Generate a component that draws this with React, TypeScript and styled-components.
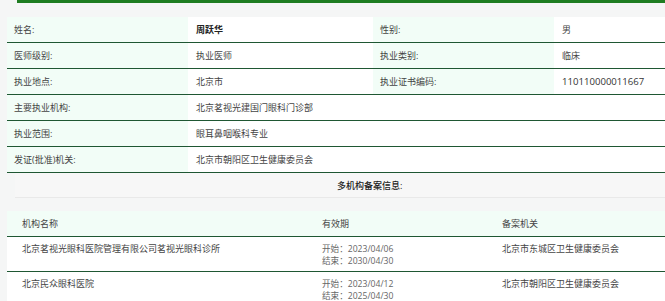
import { Fragment } from "react";
import styled, { createGlobalStyle } from "styled-components";

const GlobalStyle = createGlobalStyle`
  html, body {
    margin: 0;
    padding: 0;
    overflow: hidden;
    background: #f5f6f6;
  }
  body {
    font-family: "Open Sans", "Noto Sans CJK SC", sans-serif;
    color: #333;
  }
`;

const Page = styled.div`
  width: 665px;
  overflow: hidden;
`;

const TopBar = styled.div`
  margin-left: 17px;
  height: 3px;
  background: #1f7d22;
`;

const InfoTable = styled.div`
  margin: 14px 0 0 7px;
  display: grid;
  grid-template-columns: 181px 185px 181px 200px;
`;

const Cell = styled.div<{ $label?: boolean; $span?: number; $bold?: boolean }>`
  grid-column: span ${(p) => p.$span ?? 1};
  height: 25px;
  display: flex;
  align-items: center;
  padding-left: ${(p) => (p.$label ? 7 : 8)}px;
  background: ${(p) => (p.$label ? "#f2fdf7" : "#fff")};
  border-bottom: 1px solid #1f5733;
  font-size: 9px;
  font-weight: ${(p) => (p.$bold ? 700 : 400)};
  color: ${(p) => (p.$bold ? "#222" : "#444")};
  white-space: nowrap;
`;

const Num = styled.span`
  font-size: 9.6px;
  color: #333;
`;

const SectionBar = styled.div`
  height: 24px;
  display: flex;
  align-items: center;
  background: #f7f7f7;
  border-bottom: 1px solid #e9e9e9;
  margin-left: 15px;
  padding-left: 322px;
  font-size: 9px;
  font-weight: 500;
  color: #222;
`;

const Spacer = styled.div`
  height: 13px;
`;

const RecordTable = styled.div`
  margin-left: 7px;
  display: grid;
  grid-template-columns: 300px 180px 273px;
`;

const HeadCell = styled.div`
  height: 25px;
  display: flex;
  align-items: center;
  padding-left: 15px;
  background: #f2fdf7;
  border-bottom: 1px solid #1f5733;
  font-size: 9px;
  color: #444;
`;

const BodyCell = styled.div`
  height: 35px;
  padding: 6px 0 0 15px;
  box-sizing: border-box;
  background: #fff;
  border-bottom: 1px solid #1f5733;
  font-size: 9px;
  line-height: 12px;
  color: #444;
  white-space: nowrap;
`;

const DateLine = styled.div`
  color: #666;
  font-size: 8.6px;
`;

const records = [
  {
    name: "北京茗视光眼科医院管理有限公司茗视光眼科诊所",
    start: "2023/04/06",
    end: "2030/04/30",
    org: "北京市东城区卫生健康委员会",
  },
  {
    name: "北京民众眼科医院",
    start: "2023/04/12",
    end: "2025/04/30",
    org: "北京市朝阳区卫生健康委员会",
  },
];

export default function App() {
  return (
    <Page>
      <GlobalStyle />
      <TopBar />
      <InfoTable>
        <Cell $label>姓名:</Cell>
        <Cell $bold>周跃华</Cell>
        <Cell $label>性别:</Cell>
        <Cell>男</Cell>

        <Cell $label>医师级别:</Cell>
        <Cell>执业医师</Cell>
        <Cell $label>执业类别:</Cell>
        <Cell>临床</Cell>

        <Cell $label>执业地点:</Cell>
        <Cell>北京市</Cell>
        <Cell $label>执业证书编码:</Cell>
        <Cell>
          <Num>110110000011667</Num>
        </Cell>

        <Cell $label>主要执业机构:</Cell>
        <Cell $span={3}>北京茗视光建国门眼科门诊部</Cell>

        <Cell $label>执业范围:</Cell>
        <Cell $span={3}>眼耳鼻咽喉科专业</Cell>

        <Cell $label>发证(批准)机关:</Cell>
        <Cell $span={3}>北京市朝阳区卫生健康委员会</Cell>
      </InfoTable>
      <SectionBar>多机构备案信息:</SectionBar>
      <Spacer />
      <RecordTable>
        <HeadCell>机构名称</HeadCell>
        <HeadCell>有效期</HeadCell>
        <HeadCell>备案机关</HeadCell>
        {records.map((r) => (
          <Fragment key={r.name}>
            <BodyCell>{r.name}</BodyCell>
            <BodyCell>
              <DateLine>开始：{r.start}</DateLine>
              <DateLine>结束：{r.end}</DateLine>
            </BodyCell>
            <BodyCell>{r.org}</BodyCell>
          </Fragment>
        ))}
      </RecordTable>
    </Page>
  );
}
